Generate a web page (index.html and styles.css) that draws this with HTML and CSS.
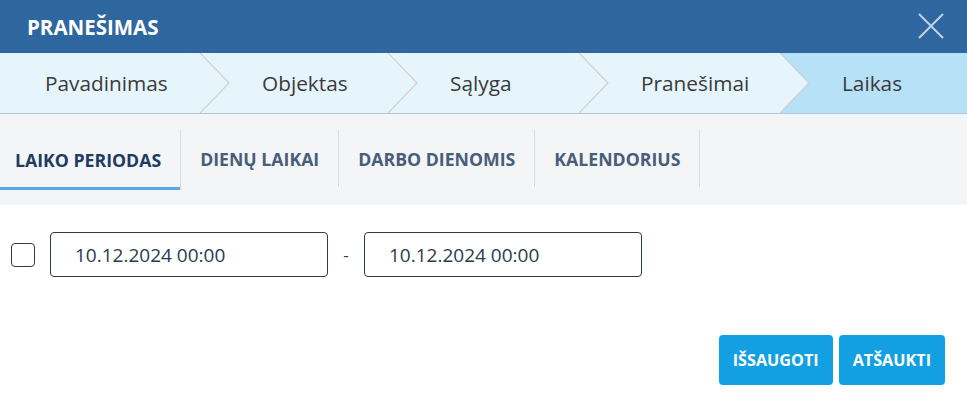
FILE: index.html
```html
<!DOCTYPE html>
<html lang="lt">
<head>
<meta charset="utf-8">
<title>Pranešimas</title>
<link rel="stylesheet" href="styles.css">
</head>
<body>
<div class="dialog">
  <header class="dlg-header">
    <h1 class="dlg-title">PRANEŠIMAS</h1>
    <button class="dlg-close" aria-label="Uždaryti">
      <svg width="26" height="26" viewBox="0 0 26 26"><path d="M1 1 L25 25 M25 1 L1 25" stroke="#c3d2e2" stroke-width="2" fill="none"/></svg>
    </button>
  </header>

  <nav class="steps">
    <div class="step step-first">Pavadinimas<svg class="chev" viewBox="0 0 30 61" preserveAspectRatio="none"><polygon points="0,0 29,30.5 0,61" fill="#e6f5fc"/><polyline points="0,0 29,30.5 0,61" fill="none" stroke="#cfcfcf" stroke-width="1.2"/></svg></div>
    <div class="step">Objektas<svg class="chev" viewBox="0 0 30 61" preserveAspectRatio="none"><polygon points="0,0 29,30.5 0,61" fill="#e6f5fc"/><polyline points="0,0 29,30.5 0,61" fill="none" stroke="#cfcfcf" stroke-width="1.2"/></svg></div>
    <div class="step">Sąlyga<svg class="chev" viewBox="0 0 30 61" preserveAspectRatio="none"><polygon points="0,0 29,30.5 0,61" fill="#e6f5fc"/><polyline points="0,0 29,30.5 0,61" fill="none" stroke="#cfcfcf" stroke-width="1.2"/></svg></div>
    <div class="step">Pranešimai<svg class="chev" viewBox="0 0 30 61" preserveAspectRatio="none"><polygon points="0,0 29,30.5 0,61" fill="#e6f5fc"/><polyline points="0,0 29,30.5 0,61" fill="none" stroke="#cfcfcf" stroke-width="1.2"/></svg></div>
    <div class="step step-active">Laikas</div>
  </nav>

  <div class="tabs">
    <div class="tab tab-active">LAIKO PERIODAS</div>
    <div class="tab">DIENŲ LAIKAI</div>
    <div class="tab">DARBO DIENOMIS</div>
    <div class="tab">KALENDORIUS</div>
  </div>

  <div class="period">
    <span class="check"></span>
    <div class="field">10.12.2024 00:00</div>
    <span class="dash">-</span>
    <div class="field">10.12.2024 00:00</div>
  </div>

  <div class="actions">
    <button class="btn">IŠSAUGOTI</button>
    <button class="btn">ATŠAUKTI</button>
  </div>
</div>
</body>
</html>
```
FILE: styles.css
```css
* { box-sizing: border-box; }
html, body { margin: 0; padding: 0; background: #fff; }
body { font-family: "Open Sans", "Noto Sans", sans-serif; color: #333; }

.dialog { width: 967px; height: 411px; display: flex; flex-direction: column; }

.dlg-header {
  height: 53px;
  background: #2e67a0;
  display: flex;
  align-items: center;
  justify-content: space-between;
  padding: 0 23px 0 27px;
}
.dlg-title {
  margin: 0;
  color: #fff;
  font-size: 20.5px;
  font-weight: 700;
}
.dlg-close {
  background: none;
  border: 0;
  padding: 0;
  width: 26px;
  height: 26px;
  display: flex;
  margin-top: -1px;
}

.steps {
  height: 61px;
  display: grid;
  grid-template-columns: 200px 188px 191px 201px 1fr;
  background: #e6f5fc;
  border-bottom: 1px solid #b4c6d8;
}
.step {
  position: relative;
  display: flex;
  align-items: center;
  padding-left: 62px;
  font-size: 20.8px;
  color: #3a3a3a;
  background: #e6f5fc;
}
.step-first { padding-left: 45px; z-index: 5; }
.step:nth-child(2) { z-index: 4; }
.step:nth-child(3) { z-index: 3; }
.step:nth-child(4) { z-index: 2; }
.step-active { background: #b6e1f6; z-index: 1; }
.chev {
  position: absolute;
  top: 0;
  right: -30px;
  width: 30px;
  height: 60px;
}

.tabs {
  height: 91px;
  background: #f4f5f7;
  display: flex;
  align-items: flex-start;
  padding-top: 16px;
}
.tab {
  height: 57px;
  display: flex;
  align-items: center;
  padding: 0 19px;
  font-size: 17.7px;
  font-weight: 700;
  color: #485d7a;
  border-right: 1px solid #d6dbe2;
}
.tab-active {
  color: #213b62;
  padding-left: 15px;
  padding-right: 19px;
  height: 60px;
  border-right: 0;
  box-shadow: inset 0 -3px 0 #5aa6e6, 1px 0 0 #d6dbe2;
  margin-right: 1px;
}

.period {
  display: flex;
  align-items: center;
  padding: 27px 0 0 11px;
}
.check {
  width: 24px;
  height: 24px;
  border: 1.5px solid #2d3a4a;
  border-radius: 4px;
  margin-right: 15px;
}
.field {
  width: 278px;
  height: 45px;
  border: 1px solid #2d3a4a;
  border-radius: 4px;
  display: flex;
  align-items: center;
  padding-left: 24px;
  font-size: 19px;
  color: #2c3a4c;
}
.dash {
  width: 36px;
  text-align: center;
  font-size: 17px;
  color: #2c3a4c;
}

.actions {
  display: flex;
  justify-content: flex-end;
  gap: 6px;
  padding: 58px 22px 0 0;
}
.btn {
  height: 50px;
  border: 0;
  border-radius: 4px;
  background: #13a0e3;
  color: #fff;
  font-family: "Open Sans", "Noto Sans", sans-serif;
  font-weight: 700;
  font-size: 16.2px;
  padding: 0 14px;
}
```
